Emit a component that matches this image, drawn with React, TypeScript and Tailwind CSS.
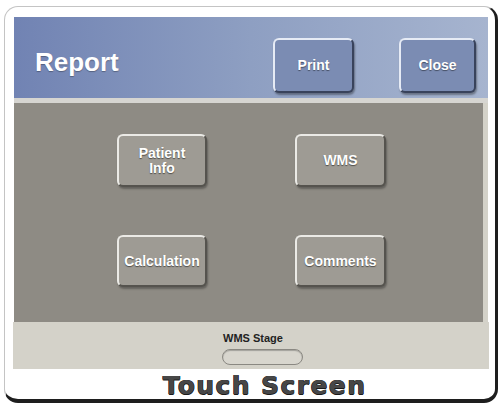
export default function App() {
  const blueBtn =
    "flex items-center justify-center rounded-[6px] border-2 border-t-[#e6ebf5] border-l-[#e6ebf5] border-b-[#39435c] border-r-[#39435c] bg-[#7b8cb3] text-[14px] font-bold text-white [text-shadow:0_1px_1px_rgba(0,0,0,0.45)] shadow-[1px_2px_2px_rgba(0,0,0,0.35)]";
  const grayBtn =
    "flex items-center justify-center rounded-[6px] border-2 border-t-[#ebeae6] border-l-[#ebeae6] border-b-[#55534e] border-r-[#55534e] bg-[#9e9b94] text-center text-[14px] font-bold leading-[15px] text-white [text-shadow:0_1px_1px_rgba(0,0,0,0.5)] shadow-[1px_2px_2px_rgba(0,0,0,0.3)]";

  return (
    <div
      className="h-[409px] w-[504px] bg-white pl-[4px] pt-[6px]"
      style={{ fontFamily: '"Liberation Sans", Arial, sans-serif' }}
    >
      <div className="flex h-[397px] w-[494px] flex-col rounded-[14px] border border-[#c4c4c4] border-b-[4px] border-r-[3px] border-b-[#1e1e1e] border-r-[#1e1e1e] pl-[9px] pt-[10px]">
        {/* header bar */}
        <div className="flex h-[86px] w-[474px] items-start border-b-[5px] border-[#d6d5d1] bg-gradient-to-r from-[#7183b3] via-[#8e9fc2] to-[#a6b4cf] pr-[12px]">
          <div className="pl-[21px] pt-[32px] text-[26px] font-bold leading-[26px] text-white [text-shadow:0_1px_1px_rgba(0,0,0,0.3)]">
            Report
          </div>
          <div className="ml-auto mt-[21px] flex gap-[45px]">
            <div className={`${blueBtn} h-[55px] w-[81px]`}>Print</div>
            <div className={`${blueBtn} h-[55px] w-[77px]`}>Close</div>
          </div>
        </div>

        {/* button area */}
        <div className="w-[474px] bg-[#d4d2c9] pr-[5px]">
          <div className="h-[219px] bg-[#8e8b84] pl-[103px] pt-[31px]">
            <div className="grid grid-cols-[90px_91px] gap-x-[88px] gap-y-[48px]">
              <div className={`${grayBtn} h-[53px]`}>
                Patient
                <br />
                Info
              </div>
              <div className={`${grayBtn} h-[53px]`}>WMS</div>
              <div className={`${grayBtn} h-[52px]`}>Calculation</div>
              <div className={`${grayBtn} h-[52px]`}>Comments</div>
            </div>
          </div>
        </div>

        {/* stage strip */}
        <div className="flex h-[47px] w-[476px] -ml-[1px] flex-col bg-[#d4d2c9]">
          <div className="pl-[210px] pt-[10px] text-[11px] font-bold leading-[12px] text-[#222]">
            WMS Stage
          </div>
          <div className="ml-[209px] mt-[5px] h-[16px] w-[81px] rounded-full border border-[#8a8882] bg-[#d8d6ce] shadow-[inset_0_1px_1px_rgba(0,0,0,0.25)]" />
        </div>

        {/* footer label */}
        <div className="flex h-[30px] w-[474px] items-center justify-center pl-[27px] pt-[2px]">
          <span
            className="text-[25px] font-bold leading-[25px] tracking-[1.4px] text-[#474747] [text-shadow:0.5px_0_0_#1a1a1a,-0.5px_0_0_#1a1a1a,0_0.5px_0_#1a1a1a]"
            style={{ fontFamily: '"DejaVu Sans", sans-serif' }}
          >
            Touch Screen
          </span>
        </div>
      </div>
    </div>
  );
}
